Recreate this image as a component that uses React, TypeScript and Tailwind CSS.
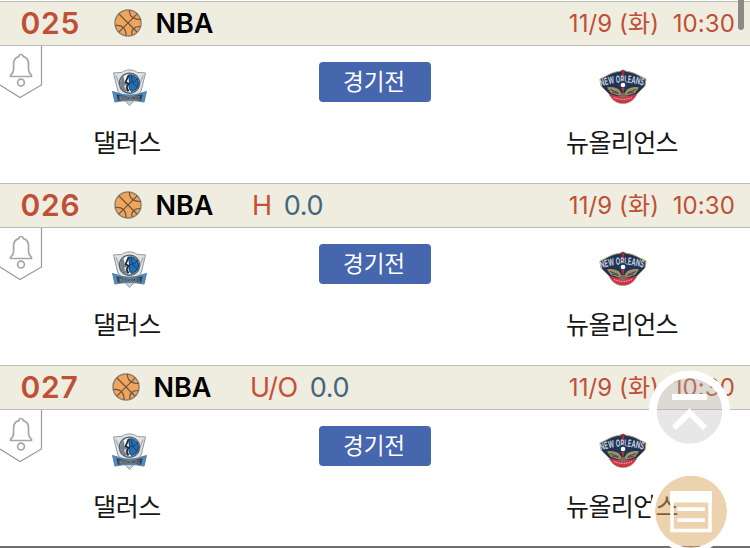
import {FC, useId} from 'react';

type Game = {
  no: string;
  type?: string;
  line?: string;
};

const games: Game[] = [
  {no: '025'},
  {no: '026', type: 'H', line: '0.0'},
  {no: '027', type: 'U/O', line: '0.0'},
];

const Basketball: FC = () => (
  <svg className="mb-0.5 size-7 shrink-0" viewBox="0 0 28 28" fill="none" stroke="#65564a" strokeWidth="1.2">
    <circle cx="14" cy="14" r="13" fill="#f2a55a" stroke="#8b8373" strokeWidth="1.500" />
    <path d="M5 5 23 23M23.200 4.800 4.800 23.200" />
    <path d="M15.500 1c-.5 6 3.500 9.500 11.300 9.500M1.200 16.500c7-1 11 3 10.800 10.200M18 26c-1.200-5 2.200-8.800 8.500-8.500" />
  </svg>
);

const BellTab: FC = () => (
  <svg className="block h-[54px] w-[43px]" viewBox="0 0 43 54" fill="none">
    <path d="M41.500 0v39L20 51.500 0 39" stroke="#999" strokeWidth="1.200" />
    <g stroke="#a6a6a6" strokeWidth="1.700" strokeLinejoin="round">
      <path d="M10.500 30.500h21v-1.200c-2-1.800-3-3.300-3-6v-5.500c0-4-2.300-6.500-5.200-7.200 0-2.800-4.400-2.800-4.400 0-3 .7-5.300 3.200-5.300 7.200v5.500c0 2.700-1 4.200-3.100 6z" />
      <circle cx="21" cy="36.500" r="3.400" />
    </g>
  </svg>
);

const DallasLogo: FC = () => (
  <svg className="ml-[3px] block h-[38px] w-[35px]" viewBox="0 0 36 38">
    <path d="M1.500 3.500 10 3c5-3.500 11-3.500 16 0l8.500.5L30 22 18 37 6 22z" fill="#dfe3e6" stroke="#8f969d" />
    <path d="m4 6 6 15M32 6l-6 15" stroke="#abb2b8" strokeWidth="1.500" />
    <circle cx="18" cy="14" r="10.300" fill="#f3f4f5" stroke="#59636e" strokeWidth="1.500" />
    <path d="M17 5.500a8.700 8.700 0 0 1 3 17.200c-4-4-2-7-2-9.700z" fill="#1f6db3" stroke="#173a60" />
    <path d="M20 6c0 6 2 10 7 12M17.500 13c4 1 7-1 8.500-4" fill="none" stroke="#123b66" strokeWidth=".8" />
    <path d="M12 7c-5 4-5 11 0 15l5 1-3-5 2-4-3-2z" fill="#77838f" />
    <path d="m13 8 4-1-1 4-3 2zM13 16l2 1 1 4-3-2z" fill="#fff" />
    <path d="m17 6-3 7 3 1.500-2 4 2 4" fill="none" stroke="#1d2935" strokeWidth="1.800" />
    <path d="m.5 22.500 5 1.500c8 3 17 3 25 0l5-1.500-2.500 11c-9-2-21-2-30 0z" fill="#4a8fcb" stroke="#536f87" strokeWidth=".8" />
    <path d="m4.500 25.500 4.500 1c6 1.500 12 1.500 18 0l4.500-1-1.500 6.500c-8-1.500-16-1.500-24 0z" fill="#35404c" />
    <text x="18" y="31" textAnchor="middle" textLength="21" lengthAdjust="spacingAndGlyphs" fill="#8b949c" className="font-['Inter'] text-[4.500px] font-bold">MAVERICKS</text>
    <path d="m14 33 4 4 4-4" fill="#c5cbd0" stroke="#a0a7ad" />
  </svg>
);

const NewOrleansLogo: FC = () => {
  const arc = useId();

  return (
    <svg className="block h-9 w-[48px] overflow-visible" viewBox="0 0 48 36">
      <path d="M1 10C8 7 13 3 20 2.500L24 1l4 1.500C35 3 40 7 47 10l-1 7-8 8c-3 6-8 9.500-14 9.500S13 31 10 25l-8-8z" fill="#1f3355" stroke="#b5a274" />
      <path d="M11 25c8 3 18 3 26 0-2 6-7 9-13 9s-11-3-13-9z" fill="#d8324a" />
      <path d="M15 28.500c6 2.500 12 2.500 18 0" fill="none" stroke="#f0b7be" strokeDasharray="1.500 1" />
      <path d="M8 18.500c5-1 9 0 12 2l4 6 4-6c3-2 7-3 12-2l-4 5.500-8 2.500h-8L12 24z" fill="#a58f5e" />
      <path d="m11 20.500 8 3M13 23l7 1.500M37 20.500l-8 3M35 23l-7 1.500" stroke="#1f3355" strokeWidth=".8" />
      <path d="M24 1v8" stroke="#a32b42" strokeWidth="2.500" />
      <path id={arc} d="M2 17.500Q24 10 47 17.500" fill="none" />
      <text fill="#c3cfde" className="font-['Inter'] text-[10px] font-bold">
        <textPath href={`#${arc}`} textLength="43" lengthAdjust="spacingAndGlyphs">NEW ORLEANS</textPath>
      </text>
      <circle cx="24" cy="16.500" r="4.500" fill="#23375a" />
      <circle cx="24" cy="16" r="2.300" fill="#fff" />
      <path d="m22.500 19 1.500 6 1.500-6z" fill="#c52d43" />
      <circle cx="24" cy="27" r="3" fill="#7d6b59" />
    </svg>
  );
};

const GameRow: FC<{game: Game}> = ({game}) => (
  <section className="h-[182px]">
    <header className="flex h-[45px] items-center border-y border-[#bdbdb8] bg-[#efece0] pr-[15px]">
      <span className="w-[93px] pl-[20.5px] text-[30px] font-semibold tracking-[0.8px] text-[#bf5035]">{game.no}</span>
      <div className={game.type === 'U/O' ? 'flex items-center pl-[19px]' : 'flex items-center pl-[21px]'}>
        <Basketball />
        <span className="w-[110px] pt-px pl-[13.5px] text-[27px] font-semibold text-black">NBA</span>
        {game.type && (
          <>
            <span className="pt-0.5 text-[27px] tracking-[-0.4px] text-[#c75033]">{game.type}</span>
            <span className="pt-0.5 pl-3 text-[27px] tracking-[-0.3px] text-[#44667c]">{game.line}</span>
          </>
        )}
      </div>
      <span className="ml-auto pt-px text-[24px] tracking-[0.1px] whitespace-pre text-[#bf5035]">11/9 (화)  10:30</span>
    </header>
    <div className="flex">
      <div className="w-[43px] shrink-0">
        <BellTab />
      </div>
      <div className="flex w-[170px] flex-col items-center pt-[22.5px]">
        <DallasLogo />
        <span className="mt-[18.5px] pr-[2px] text-[25px] leading-9 tracking-[-0.5px]">댈러스</span>
      </div>
      <div className="flex flex-1 justify-center pt-4">
        <button className="h-10 w-28 rounded-[4px] bg-[#4666ad] pr-0.5 text-[22.5px] text-white">경기전</button>
      </div>
      <div className="flex w-[213px] flex-col items-center pt-[23px] pr-[41px]">
        <NewOrleansLogo />
        <span className="mt-5 pr-0.5 text-[25px] leading-9 tracking-[-0.6px]">뉴올리언스</span>
      </div>
    </div>
  </section>
);

const App: FC = () => (
  <main className="relative h-[548px] w-[750px] overflow-hidden bg-white pt-px font-['Inter','Noto_Sans_CJK_KR',sans-serif] text-[#161616]">
    {games.map(game => (
      <GameRow key={game.no} game={game} />
    ))}

    {/* page border and scrollbar thumb */}
    <div className="absolute bottom-0 left-0 h-0.5 w-full bg-[#707070]" />
    <div className="absolute top-[-10px] right-1.5 h-10 w-1.5 rounded-full bg-[#8b8a84]" />

    {/* floating buttons */}
    <button className="absolute top-[370px] left-[649px]" aria-label="top">
      <svg className="block size-[82px]" viewBox="0 0 82 82" fill="none" stroke="#fff">
        <circle cx="40.500" cy="41" r="33" fill="#b4b4b4" fillOpacity=".32" stroke="none" />
        <circle cx="40.500" cy="41" r="36.700" strokeWidth="7.800" />
        <path d="M23 27h35M25 58l15.500-15.500L56 58" strokeWidth="6" />
      </svg>
    </button>
    <button className="absolute top-[467px] left-[647px]" aria-label="list">
      <svg className="block size-[88px]" viewBox="0 0 88 88" fill="none" stroke="#fff">
        <circle cx="44" cy="44.500" r="36" fill="#d9a55d" fillOpacity=".5" stroke="none" />
        <circle cx="44" cy="44.500" r="38.500" strokeWidth="5" />
        <path d="M25 26v37.500h38V26z" strokeWidth="3.500" />
        <path d="M23.300 29.800h41.400" strokeWidth="11.500" />
        <path d="M30.300 42.200H58M30.300 53.200H58" strokeWidth="3.700" />
      </svg>
    </button>
  </main>
);

export default App;
